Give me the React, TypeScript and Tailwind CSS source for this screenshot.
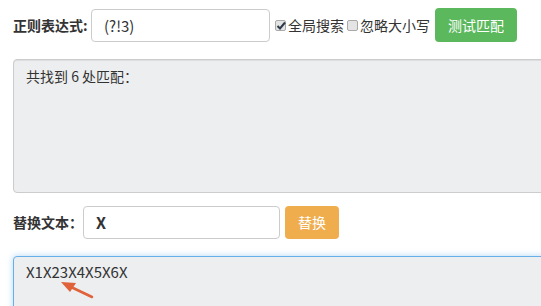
import { useState } from 'react';

const font = { fontFamily: '"Microsoft YaHei", "Noto Sans CJK SC", "Noto Sans", sans-serif' };

function Check({ checked, onChange, label, className }: { checked: boolean; onChange: (v: boolean) => void; label: string; className?: string }) {
  return (
    <label className={`flex items-center leading-none whitespace-nowrap cursor-pointer ${className ?? ''}`}>
      <input type="checkbox" checked={checked} onChange={(e) => onChange(e.target.checked)} className="hidden" />
      <span className="relative mr-[2px] w-[11px] h-[11px] rounded-[2px] border border-[#a9a9a9] bg-[#e4e4e4]">
        {checked && (
          <svg className="absolute left-[0px] top-[0px]" width="10" height="10" viewBox="0 0 10 10">
            <path d="M1.5 5 L4 7.5 L9 1.5" stroke="#2d3a4a" strokeWidth="2" fill="none" />
          </svg>
        )}
      </span>
      {label}
    </label>
  );
}

export default function App() {
  const [pattern, setPattern] = useState('(?!3)');
  const [replacement, setReplacement] = useState('X');
  const [global, setGlobal] = useState(true);
  const [ignoreCase, setIgnoreCase] = useState(false);

  return (
    <div
      className="relative w-[541px] h-[306px] overflow-hidden bg-white text-[14px] text-[#333]"
      style={font}
    >
      <div className="pl-[13px]">
        {/* regex row */}
        <div className="flex items-center pt-[8px] h-[42px]">
          <label className="font-bold leading-none w-[78px] shrink-0 whitespace-nowrap">正则表达式:</label>
          <input
            value={pattern}
            onChange={(e) => setPattern(e.target.value)}
            className="h-[33px] w-[179px] shrink-0 rounded-[4px] border border-[#ccc] px-[12px] text-[15px] outline-none text-[#333]"
          />
          <Check className="ml-[5px]" checked={global} onChange={setGlobal} label="全局搜索" />
          <Check className="ml-[3px]" checked={ignoreCase} onChange={setIgnoreCase} label="忽略大小写" />
          <button className="ml-[5px] h-[34px] w-[82px] shrink-0 rounded-[4px] bg-[#5cb85c] text-white leading-none">
            测试匹配
          </button>
        </div>

        {/* match result */}
        <div className="mt-[17px] h-[134px] w-[560px] rounded-[4px] border border-[#ccc] bg-[#eceeef] px-[12px] pt-[6px] shadow-[inset_0_1px_1px_rgba(0,0,0,0.075)]">
          共找到 6 处匹配：
        </div>

        {/* replace row */}
        <div className="mt-[12px] flex items-center h-[34px]">
          <label className="font-bold leading-none w-[70px] shrink-0 whitespace-nowrap">替换文本：</label>
          <input
            value={replacement}
            onChange={(e) => setReplacement(e.target.value)}
            className="h-[33px] w-[197px] shrink-0 rounded-[4px] border border-[#ccc] px-[12px] font-bold text-[16px] outline-none text-[#333]"
          />
          <button className="ml-[5px] h-[33px] w-[54px] shrink-0 rounded-[4px] bg-[#f0ad4e] text-white leading-none">
            替换
          </button>
        </div>

        {/* replace result */}
        <div className="mt-[17px] h-[80px] w-[560px] rounded-[4px] border border-[#66afe9] bg-[#eceeef] px-[12px] pt-[4px] text-[15px] shadow-[0_0_6px_rgba(102,175,233,0.5)]">
          X1X23X4X5X6X
        </div>
      </div>

      {/* annotation arrow */}
      <svg className="absolute left-[55px] top-[276px]" width="45" height="28" viewBox="0 0 45 28">
        <path d="M37 21 L16 11" stroke="#e0623b" strokeWidth="2.5" strokeLinecap="round" />
        <path d="M6 6 L21 7 L15 16 Z" fill="#e0623b" />
      </svg>
    </div>
  );
}
